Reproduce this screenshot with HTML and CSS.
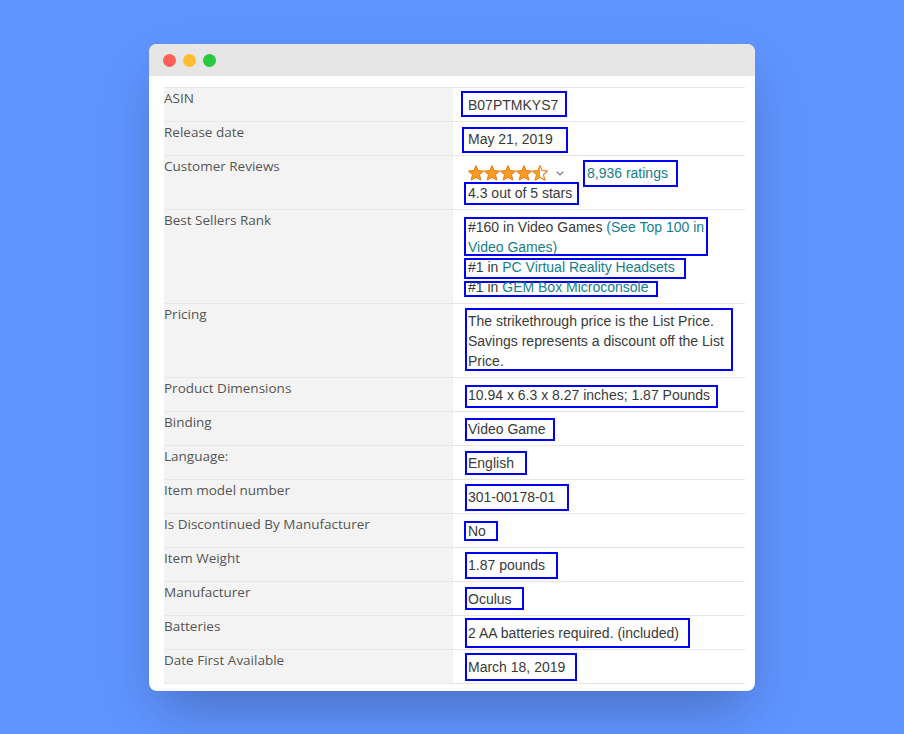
FILE: index.html
```html
<!DOCTYPE html>
<html lang="en">
<head>
<meta charset="utf-8">
<title>Product details</title>
<link rel="stylesheet" href="styles.css">
</head>
<body>
<main class="window">
  <header class="titlebar">
    <span class="dot dot-red"></span>
    <span class="dot dot-yellow"></span>
    <span class="dot dot-green"></span>
  </header>
  <div class="table">
    <div class="row h34"><div class="label">ASIN</div><div class="value"><div class="box b-asin">B07PTMKYS7</div></div></div>
    <div class="row h34"><div class="label">Release date</div><div class="value"><div class="box b-date">May 21, 2019</div></div></div>
    <div class="row h54"><div class="label">Customer Reviews</div><div class="value">
      <div class="rating">
        <svg class="stars" viewBox="0 0 80 16" width="80" height="16" aria-hidden="true">
          <defs><polygon id="star" points="8,0.6 10.2,5.6 15.6,6.1 11.5,9.7 12.8,15.1 8,12.3 3.2,15.1 4.5,9.7 0.4,6.1 5.8,5.6"/></defs>
          <use href="#star" class="s-full"/>
          <use href="#star" x="16" class="s-full"/>
          <use href="#star" x="32" class="s-full"/>
          <use href="#star" x="48" class="s-full"/>
          <use href="#star" x="64" class="s-empty"/>
          <polygon class="s-half" points="72,0.6 72,12.3 67.2,15.1 68.5,9.7 64.4,6.1 69.8,5.6"/>
        </svg>
        <svg class="chevron" viewBox="0 0 8 5" width="8" height="5" aria-hidden="true"><path d="M0.7 0.7 L4 4 L7.3 0.7"/></svg>
        <div class="box b-ratings link">8,936 ratings</div>
      </div>
      <div class="box b-score">4.3 out of 5 stars</div>
    </div></div>
    <div class="row h94"><div class="label">Best Sellers Rank</div><div class="value">
      <div class="box b-rank1">
        <div class="rank-line">#160 in Video Games <span class="link">(See Top 100 in</span></div>
        <div class="link">Video Games)</div>
      </div>
      <div class="box b-rank2">#1 in <span class="link">PC Virtual Reality Headsets</span></div>
      <div class="box b-rank3">#1 in <span class="link">GEM Box Microconsole</span></div>
    </div></div>
    <div class="row h74"><div class="label">Pricing</div><div class="value"><div class="box b-price">The strikethrough price is the List Price. Savings represents a discount off the List Price.</div></div></div>
    <div class="row h34"><div class="label">Product Dimensions</div><div class="value"><div class="box b-dim">10.94 x 6.3 x 8.27 inches; 1.87 Pounds</div></div></div>
    <div class="row h34"><div class="label">Binding</div><div class="value"><div class="box b-bind">Video Game</div></div></div>
    <div class="row h34"><div class="label">Language:</div><div class="value"><div class="box b-lang">English</div></div></div>
    <div class="row h34"><div class="label">Item model number</div><div class="value"><div class="box b-model">301-00178-01</div></div></div>
    <div class="row h34"><div class="label">Is Discontinued By Manufacturer</div><div class="value"><div class="box b-no">No</div></div></div>
    <div class="row h34"><div class="label">Item Weight</div><div class="value"><div class="box b-weight">1.87 pounds</div></div></div>
    <div class="row h34"><div class="label">Manufacturer</div><div class="value"><div class="box b-maker">Oculus</div></div></div>
    <div class="row h34"><div class="label">Batteries</div><div class="value"><div class="box b-batt">2 AA batteries required. (included)</div></div></div>
    <div class="row h34 last"><div class="label">Date First Available</div><div class="value"><div class="box b-first">March 18, 2019</div></div></div>
  </div>
</main>
</body>
</html>
```
FILE: styles.css
```css
* { box-sizing: border-box; }
html, body { margin: 0; height: 100%; }
body {
  background: #5f94ff;
  padding-top: 44px;
  overflow: hidden;
  font-family: "Liberation Sans", Arial, sans-serif;
}
.window {
  width: 606px;
  margin: 0 auto;
  background: #fff;
  border-radius: 8px;
  box-shadow: 0 25px 50px -10px rgba(0, 0, 0, 0.25);
  overflow: hidden;
}
.titlebar {
  height: 32px;
  background: #e6e6e6;
  display: flex;
  align-items: center;
  gap: 7px;
  padding-left: 14px;
}
.dot { width: 13px; height: 13px; border-radius: 50%; }
.dot-red { background: #ff5f57; }
.dot-yellow { background: #ffbd2e; }
.dot-green { background: #28c840; }

.table { padding: 11px 10px 7px 15px; }
.row {
  display: grid;
  grid-template-columns: 289px 1fr;
  border-top: 1px solid #e7e7e7;
}
.row.last { border-bottom: 1px solid #e7e7e7; height: 35px; }
.h34 { height: 34px; }
.h54 { height: 54px; }
.h74 { height: 74px; }
.h94 { height: 94px; }
.label {
  background: #f3f3f3;
  color: #555;
  font-family: "Open Sans", sans-serif;
  font-size: 13.5px;
  line-height: 20px;
}
.value { font-size: 14px; color: #3a3a3a; }
.link { color: #167d8c; }

.box {
  border: 2px solid #0000f5;
  padding-left: 1px;
  white-space: nowrap;
}
.b-asin { margin: 3px 0 0 8px; width: 106px; height: 26px; line-height: 24px; padding-left: 5px; }
.b-date { margin: 5px 0 0 9px; width: 106px; height: 26px; line-height: 20px; padding-left: 4px; }
.rating { display: flex; align-items: flex-start; height: 26px; }
.stars { margin: 9px 0 0 15px; flex: none; }
.chevron { margin: 15px 0 0 8px; flex: none; fill: none; stroke: #777; stroke-width: 1.1; }
.s-full, .s-half { fill: #fa9a22; }
.s-full { stroke: #e47911; stroke-width: 1; }
.s-empty { fill: #fff; stroke: #e47911; stroke-width: 1.1; }
.box.b-ratings { margin: 4px 0 0 19px; width: 95px; height: 27px; line-height: 22px; padding-left: 2px; }
.b-score { margin: 0 0 0 11px; width: 115px; height: 23px; line-height: 18px; padding-left: 2px; }
.b-rank1 { margin: 7px 0 0 11px; width: 244px; height: 39px; padding-left: 2px; line-height: 20px; }
.rank-line { margin-top: -2px; }
.b-rank2 { margin: 2px 0 0 11px; width: 222px; height: 21px; line-height: 14px; padding-left: 2px; }
.b-rank3 { margin: 2px 0 0 11px; width: 194px; height: 16px; line-height: 8px; padding-left: 2px; }
.b-price { margin: 4px 0 0 12px; width: 268px; height: 63px; padding-top: 1px; line-height: 20px; white-space: normal; }
.b-dim { margin: 7px 0 0 12px; width: 253px; height: 23px; line-height: 16px; }
.b-bind { margin: 6px 0 0 12px; width: 90px; height: 23px; line-height: 18px; }
.b-lang { margin: 5px 0 0 12px; width: 62px; height: 24px; line-height: 20px; }
.b-model { margin: 4px 0 0 12px; width: 104px; height: 27px; line-height: 22px; }
.b-no { margin: 7px 0 0 11px; width: 34px; height: 20px; line-height: 16px; padding-left: 2px; }
.b-weight { margin: 4px 0 0 12px; width: 93px; height: 27px; line-height: 22px; }
.b-maker { margin: 5px 0 0 12px; width: 59px; height: 23px; line-height: 20px; }
.b-batt { margin: 2px 0 0 12px; width: 225px; height: 30px; line-height: 26px; }
.b-first { margin: 3px 0 0 12px; width: 112px; height: 28px; line-height: 24px; }
```
